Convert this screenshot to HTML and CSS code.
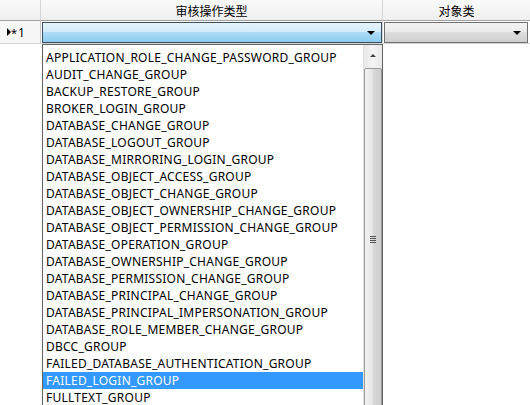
FILE: index.html
```html
<!DOCTYPE html>
<html>
<head>
<meta charset="utf-8">
<link rel="stylesheet" href="styles.css">
</head>
<body>
<div class="grid">
  <div class="hdr corner"></div>
  <div class="hdr c1">审核操作类型</div>
  <div class="hdr c2">对象类</div>

  <div class="rowhead"><span class="tri"></span><span class="star">*</span>1</div>
  <div class="cell c1cell">
    <div class="combo active"><span class="arrow"></span></div>
  </div>
  <div class="cell c2cell">
    <div class="combo plain"><span class="arrow"></span></div>
  </div>
</div>

<div class="dropdown">
  <ul class="list">
    <li>APPLICATION_ROLE_CHANGE_PASSWORD_GROUP</li>
    <li>AUDIT_CHANGE_GROUP</li>
    <li>BACKUP_RESTORE_GROUP</li>
    <li>BROKER_LOGIN_GROUP</li>
    <li>DATABASE_CHANGE_GROUP</li>
    <li>DATABASE_LOGOUT_GROUP</li>
    <li>DATABASE_MIRRORING_LOGIN_GROUP</li>
    <li>DATABASE_OBJECT_ACCESS_GROUP</li>
    <li>DATABASE_OBJECT_CHANGE_GROUP</li>
    <li>DATABASE_OBJECT_OWNERSHIP_CHANGE_GROUP</li>
    <li>DATABASE_OBJECT_PERMISSION_CHANGE_GROUP</li>
    <li>DATABASE_OPERATION_GROUP</li>
    <li>DATABASE_OWNERSHIP_CHANGE_GROUP</li>
    <li>DATABASE_PERMISSION_CHANGE_GROUP</li>
    <li>DATABASE_PRINCIPAL_CHANGE_GROUP</li>
    <li>DATABASE_PRINCIPAL_IMPERSONATION_GROUP</li>
    <li>DATABASE_ROLE_MEMBER_CHANGE_GROUP</li>
    <li>DBCC_GROUP</li>
    <li>FAILED_DATABASE_AUTHENTICATION_GROUP</li>
    <li class="sel">FAILED_LOGIN_GROUP</li>
    <li>FULLTEXT_GROUP</li>
  </ul>
  <div class="scroll">
    <div class="sbtn"><span class="up"></span></div>
    <div class="thumb"><span class="grip"></span></div>
  </div>
</div>
</body>
</html>
```

FILE: styles.css
```css
html, body {
  margin: 0;
  padding: 0;
  background: #fff;
  width: 530px;
  height: 405px;
  overflow: hidden;
  font-family: "Noto Sans", "Noto Sans CJK SC", sans-serif;
  font-size: 12px;
  color: #000;
}

.grid {
  display: grid;
  grid-template-columns: 41px 342px 147px;
  grid-template-rows: 21px 23px;
}

.hdr {
  background: linear-gradient(#fafafa, #efefef);
  border-bottom: 1px solid #a0a0a0;
  border-right: 1px solid #d5d5d5;
  display: flex;
  align-items: center;
  justify-content: center;
  font-family: "Noto Sans CJK SC", sans-serif;
  font-size: 12px;
  line-height: 1;
  box-sizing: border-box;
  padding-top: 1px;
}
.hdr.c2 { border-right: none; }

.rowhead {
  background: #f7f7f7;
  border-right: 1px solid #c8c8c8;
  border-bottom: 1px solid #d5d5d5;
  display: flex;
  align-items: center;
  padding-left: 7px;
  box-sizing: border-box;
  font-size: 12px;
}
.tri {
  width: 0; height: 0;
  border-top: 4px solid transparent;
  border-bottom: 4px solid transparent;
  border-left: 4px solid #000;
}
.star { font-size: 11px; margin-right: 1px; }

.cell {
  border-right: 1px solid #d5d5d5;
  border-bottom: 1px solid #d5d5d5;
  box-sizing: border-box;
  padding: 1px 0 0 1px;
}
.c2cell { border-right: none; padding-right: 2px; }

.combo {
  height: 21px;
  box-sizing: border-box;
  border: 1px solid #5b6a7a;
  position: relative;
}
.combo.active {
  border-color: #3c4d5e;
  background: linear-gradient(#e6f4fc 0%, #d2ecfb 45%, #aedcf6 50%, #8ccbef 100%);
}
.combo.plain {
  border-color: #707070;
  background: linear-gradient(#f2f2f2 0%, #ebebeb 45%, #dddddd 50%, #cfcfcf 100%);
}
.arrow {
  position: absolute;
  right: 6px;
  top: 8px;
  width: 0; height: 0;
  border-left: 4px solid transparent;
  border-right: 4px solid transparent;
  border-top: 4px solid #000;
}

.dropdown {
  position: absolute;
  left: 42px;
  top: 44px;
  width: 341px;
  height: 370px;
  box-sizing: border-box;
  border: 1px solid #646464;
  background: #fff;
  display: flex;
}
.list {
  list-style: none;
  margin: 0;
  padding: 4px 0 0 0;
  flex: 1;
}
.list li {
  height: 17px;
  line-height: 17px;
  padding-left: 3px;
  white-space: nowrap;
  letter-spacing: 0.24px;
}
.list li.sel {
  background: #3399ff;
  color: #fff;
}

.scroll {
  width: 18px;
  background: linear-gradient(90deg, #e8e8e8, #f4f4f4 50%, #e8e8e8);
  display: flex;
  flex-direction: column;
  border-left: 1px solid #e2e2e2;
}
.sbtn {
  height: 17px;
  display: flex;
  align-items: center;
  justify-content: center;
  margin-top: 2px;
}
.up {
  width: 0; height: 0;
  border-left: 3px solid transparent;
  border-right: 3px solid transparent;
  border-bottom: 3px solid #404040;
}
.thumb {
  flex: 1;
  margin: 4px 0 0 0;
  border: 1px solid #9a9a9a;
  border-radius: 2px;
  background: linear-gradient(90deg, #f3f3f3, #e6e6e6 45%, #d6d6d6 55%, #cfcfcf);
  display: flex;
  justify-content: center;
  padding-top: 167px;
}
.grip {
  width: 6px;
  height: 7px;
  background: repeating-linear-gradient(#555 0 1px, transparent 1px 2px);
}
```
